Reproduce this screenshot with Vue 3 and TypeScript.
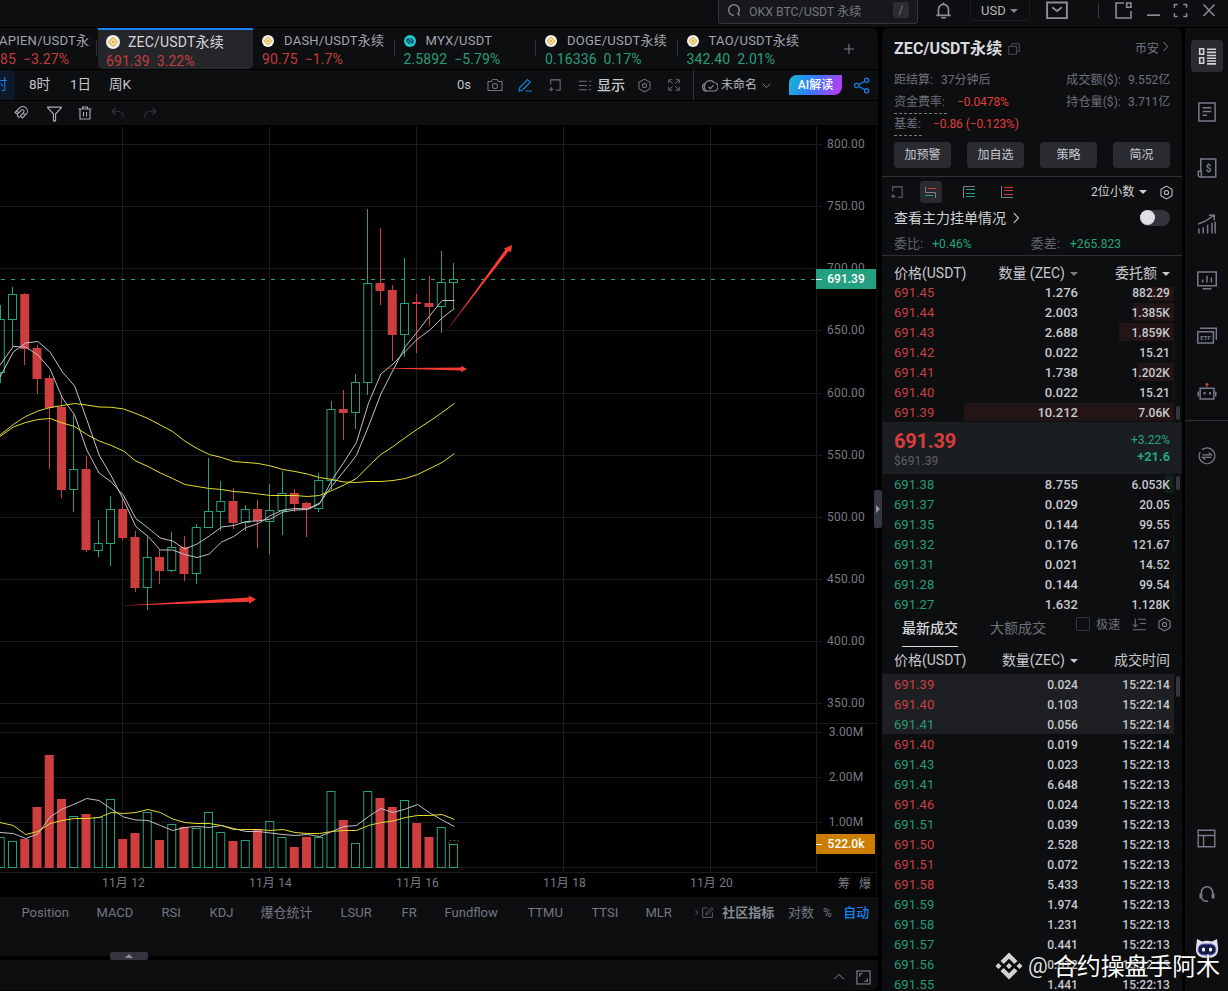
<script setup lang="ts">
import { defineComponent, h } from 'vue'

const glyphs: Record<string, string> = {
  search: 'M7.5 13.2a5.7 5.7 0 1 1 4-1.7l2 1.9',
  bell: 'M1.2 12.5h13.6M3.3 12V7a4.7 4.7 0 0 1 9.4 0v5M8 2.3V.5M5.8 14.8h4.4',
  mail: 'M.8 2.5h14.4v11.4H.8zM4.5 6 8 8.8 11.5 6',
  panel: 'M8.5 1H1v14h14V8.5M11 1h4v4h-4zM1 15h14',
  minus: 'M1 13h14',
  full: 'M1.5 5V1.5H5M11 1.5h3.5V5M14.5 11v3.5H11M5 14.5H1.5V11',
  close: 'M2.5 2.5 13.5 14M13.5 2.5 2.5 14',
  copy: 'M2 5h9v9H2zM5.500 5V2H14v9h-3',
  right: 'M5.500 2.500 10.800 8 5.500 13.500',
  down: 'M3 5.500 8 10.500 13 5.500',
  up: 'M2.500 10.500 8 5 13.500 10.500',
  plus: 'M8 3v10M3 8h10',
  magnet: 'M2 7.500 6.500 3a4.500 4.500 0 0 1 6.600 6.200L9.500 13 7.300 11l3.600-3.800A1.700 1.700 0 0 0 8.500 5L4.300 9.300zM3.500 6 6 8M12.200 10.200 9.800 8M4.500 9.800a2.500 2.500 0 0 0 2.300 2.600',
  funnel: 'M1 2h14M1.500 2.500 7 8.500V15h2V8.500l5.500-6',
  trash: 'M1.500 4h13M5.500 4V2h5v2M3 4v10h10V4M6.500 7v4.500M9.500 7v4.500',
  undo: 'M5.500 3 2 6.200 5.500 9.500M2.500 6.200h5c4 0 6 2 6 6',
  redo: 'M10.500 3 14 6.200 10.500 9.500M13.500 6.200h-5c-4 0-6 2-6 6',
  camera: 'M1 4.500h3.500L6 2.500h4l1.500 2H15v9H1zM8 11.500a2.500 2.500 0 1 0 0-5 2.500 2.500 0 0 0 0 5',
  pencil: 'M2 14l.7-3.500L10.500 2.500l2.700 2.700L5.500 13zM8.500 14H15',
  addpane: 'M4 7V2h10v11H9.500M4.500 9.500v5M2 12h5',
  list: 'M1 3.500h8.500M1 8h8.500M1 12.500h8.500M12 3.500h2M12 8h2M12 12.500h2',
  hex: 'M8 1.200 13.900 4.600v6.800L8 14.800 2.100 11.400V4.600zM8 10.200a2.200 2.200 0 1 0 0-4.400 2.200 2.200 0 0 0 0 4.400',
  expand: 'M2 6V2h4M10 2h4v4M14 10v4h-4M6 14H2v-4M2.500 2.500 6.500 6.500M13.500 2.500 9.500 6.500M13.500 13.500 9.500 9.500M2.500 13.500 6.500 9.500',
  cloud: 'M5.500 13.200A3.700 3.700 0 0 1 4 6a5 5 0 0 1 8.300-.8 4 4 0 0 1-.6 8H5.500a4 4 0 0 1-1.200-6.500M7 9.200l1.800 1.800L12 7.500',
  share: 'M5.300 7.300 11 3.900M5.300 8.700 11 12.100M3.500 10.100a2.100 2.100 0 1 0 0-4.200 2.100 2.100 0 0 0 0 4.200M12.800 5a2 2 0 1 0 0-4 2 2 0 0 0 0 4M12.800 15a2 2 0 1 0 0-4 2 2 0 0 0 0 4',
  sort: 'M3.500 1.500v9M1 8l2.500 2.500L6 8M6.500 2.500H15M8.500 7H15M1 13.500h14',
  edit: 'M8 2.500H2v11.500h12V8M6 10.500l.5-2.200L13 2l1.500 1.500L8.300 10z',
  frame: 'M1 1h14v14H1zM4 7V4h3M12 9v3H9',
  board: 'M1.500 1.500h3.500v5H1.500zM1.500 9.500h3.500v5H1.500zM8 2H16M8 4.800H16M8 7.500H16M8 10H16M8 12.500H16M8 15H16',
  doc: 'M1.500 .8h13v14.400h-13zM4.500 4.500h7M4.500 7.500h7M4.500 10.500H8',
  bill: 'M3 10.500V.8h12v14.400H2.500A1.700 1.700 0 0 1 1 13.500v-3h2.500V15',
  growth: 'M1.500 11.500v4M5 10.500v5M8.500 8.500v7M12 7v8.500M14.500 6v9.500M1 8l6-2.500L13.500 1M9.500 1h4.300v4',
  screen: 'M.6 1.500h14.800v11H.6zM4.500 15h7M4.500 7.500V10M8 4.500V10M11.500 6V10',
  etf: 'M.6 4.500h12.500v9H.6zM2.500 1.800h13V11',
  robot: 'M2.500 5h11v8.500h-11zM1 7.500v4M15 7.500v4',
  swap: 'M3.500 2.500A7 7 0 1 1 1 8c0-1.500.4-2.500 1-3.500M4 7h8L9.500 4.800M12 9.200H4l2.500 2.200',
  layout: 'M1 1h14v14H1zM1 5.500h14M5.500 5.500V15',
  headset: 'M3 9V6.500a5 5 0 0 1 10 0V9M2 7.500v4.500M3.200 7.500v4.500M12.800 7.500v4.500M14 7.500v4.500M3.500 12c.8 1.800 2 2.500 4.500 2.500h1',
}

const Icon = defineComponent({
  props: { name: { type: String, required: true }, size: { type: Number, default: 16 }, weight: { type: Number, default: 1.1 } },
  setup(props) {
    return () =>
      h('svg', { width: props.size, height: props.size, viewBox: '0 0 16 16', fill: 'none', stroke: 'currentColor', 'stroke-width': props.weight }, [
        h('path', { d: glyphs[props.name] }),
      ])
  },
})

interface Tab { name: string; price: string; change: string; tone: string; coin: string }
const tabs: Tab[] = [
  { name: 'APIEN/USDT永续', price: '85', change: '-3.27%', tone: 'red', coin: '' },
  { name: 'ZEC/USDT永续', price: '691.39', change: '3.22%', tone: 'red active', coin: 'bn' },
  { name: 'DASH/USDT永续', price: '90.75', change: '-1.7%', tone: 'red', coin: 'bn' },
  { name: 'MYX/USDT', price: '2.5892', change: '-5.79%', tone: 'green', coin: 'myx' },
  { name: 'DOGE/USDT永续', price: '0.16336', change: '0.17%', tone: 'green', coin: 'bn' },
  { name: 'TAO/USDT永续', price: '342.40', change: '2.01%', tone: 'green', coin: 'bn' },
]

// [rising, wick top, body top, body bottom, wick bottom, volume top]
const candles: number[][] = [
  [1, 305, 319, 373, 383, 837], [1, 287, 294, 320, 347, 841], [0, 293, 294, 349, 365, 839], [0, 345, 348, 379, 394, 807],
  [0, 375, 378, 408, 469, 755], [0, 396, 407, 490, 498, 799], [1, 415, 469, 490, 512, 816], [0, 456, 469, 550, 552, 814],
  [1, 520, 543, 551, 557, 817], [1, 496, 509, 544, 566, 799], [0, 499, 509, 538, 540, 839], [0, 531, 537, 588, 592, 833],
  [1, 537, 557, 588, 610, 812], [0, 550, 557, 571, 584, 840], [1, 532, 547, 571, 572, 824], [0, 536, 547, 574, 581, 827],
  [1, 524, 527, 574, 584, 828], [1, 458, 511, 528, 528, 812], [1, 481, 501, 512, 531, 832], [0, 488, 501, 523, 529, 841],
  [1, 505, 509, 523, 531, 840], [0, 500, 509, 521, 548, 829], [1, 484, 510, 522, 554, 821], [1, 471, 493, 511, 535, 837],
  [0, 489, 493, 504, 512, 847], [0, 502, 503, 509, 537, 837], [1, 473, 480, 509, 512, 837], [1, 401, 409, 481, 490, 791],
  [0, 390, 409, 413, 440, 820], [1, 374, 382, 413, 429, 843], [1, 209, 283, 383, 395, 791], [0, 228, 283, 291, 305, 798],
  [0, 285, 290, 335, 361, 807], [1, 258, 303, 335, 357, 800], [0, 294, 302, 304, 353, 823], [0, 276, 303, 307, 326, 837],
  [1, 251, 282, 307, 333, 827], [1, 263, 279, 283, 309, 844],
]
const bars = candles.map(([up, wt, t, b, wb, v], i) => ({
  up: up === 1, wt, t, b, wb, v,
  x: 122.75 + (i - 10) * 12.25,
  w: Math.floor(122.8 + (i - 10) * 12.25) + 0.5,
}))

const series: { tone: string; ys: number[] }[] = [
  { tone: 'pale', ys: [377, 352, 343, 341.5, 352, 372, 386, 419.5, 455, 476, 500, 526.5, 536.5, 550, 550, 554.5, 557.5, 554, 542, 536.5, 527.5, 523.5, 515.5, 510, 508.5, 509, 503, 486, 471, 455.5, 426, 394, 370, 346.5, 331.5, 315.5, 300.5, 300.5] },
  { tone: 'pale', ys: [365, 346.5, 347, 355, 369, 398, 415, 450, 473, 482, 495.5, 518.5, 528, 538, 541, 549, 544, 536, 527, 525.5, 521.5, 521, 519, 512, 510, 509.5, 504, 480, 462, 442.5, 403, 374, 364, 351, 339, 330, 318, 308.5] },
  { tone: 'gold', ys: [435, 424.5, 416.5, 411, 407.5, 405.5, 403.5, 405, 407, 407.3, 409, 413.5, 418.5, 425, 431.5, 441, 448.5, 454.5, 457.5, 461.5, 462.5, 463.5, 466, 469.5, 471.5, 474, 477.5, 479.5, 482, 482.5, 481.5, 481.5, 480.5, 478.5, 474.5, 468.5, 462.5, 453.5] },
  { tone: 'gold', ys: [436.5, 427, 422.5, 419.5, 418.5, 423, 426.5, 434.5, 441, 445.5, 451, 461, 466.5, 473, 478.5, 484.5, 486.5, 488.5, 489.5, 491.5, 492.5, 494, 495.5, 495.5, 495.5, 496.5, 495.5, 490.5, 485, 478.5, 466, 454.5, 446.5, 437.5, 429, 421, 412.5, 403.5] },
  { tone: 'pale', ys: [832.5, 833.5, 838.5, 834, 817, 809, 804, 798.5, 800.5, 809, 817, 820, 820.5, 825.5, 830.5, 827.5, 826.5, 827.5, 825.5, 828.5, 831.5, 831.5, 833, 834.5, 835.5, 834.5, 836.5, 831.5, 826.5, 825.5, 816.5, 808.5, 812.5, 809, 804.5, 813, 820, 826.5] },
  { tone: 'gold', ys: [822.5, 825.5, 834.5, 831.5, 823.5, 820.5, 818.5, 818.5, 817.5, 812.5, 813.5, 812.5, 809.5, 812.5, 819, 822.5, 823.5, 823.5, 825.5, 829.5, 829.5, 829.5, 830.5, 829.5, 832.5, 833.5, 833.5, 831.5, 830.5, 830.5, 825.5, 822.5, 821, 817.5, 815.5, 815.5, 814.5, 819.5] },
]
const trace = (ys: number[]): string => ys.map((y, i) => `${i === 0 ? 0 : (i * 12.25 + 1.1).toFixed(1)},${y}`).join(' ')

const priceTicks: [string, number][] = [['800.00', 144.5], ['750.00', 206.5], ['700.00', 268.5], ['650.00', 330.5], ['600.00', 393.5], ['550.00', 455.5], ['500.00', 517.5], ['450.00', 579.5], ['400.00', 641.5], ['350.00', 703.5], ['3.00M', 732.5], ['2.00M', 777.5], ['1.00M', 822.5]]
const dayTicks: [string, number][] = [['11月 12', 122.5], ['11月 14', 269.5], ['11月 16', 416.5], ['11月 18', 563.5], ['11月 20', 710.5]]

const indicators: [string, number][] = [['Position', 75], ['MACD', 65], ['RSI', 48], ['KDJ', 51], ['爆仓统计', 80], ['LSUR', 61], ['FR', 43], ['Fundflow', 83], ['TTMU', 64], ['TTSI', 54], ['MLR', 49]]

// [price, quantity, amount, depth bar width]
type Level = [string, string, string, number]
const asks: Level[] = [
  ['691.45', '1.276', '882.29', 26], ['691.44', '2.003', '1.385K', 41], ['691.43', '2.688', '1.859K', 55],
  ['691.42', '0.022', '15.21', 1], ['691.41', '1.738', '1.202K', 36], ['691.40', '0.022', '15.21', 1], ['691.39', '10.212', '7.06K', 210],
]
const bids: Level[] = [
  ['691.38', '8.755', '6.053K', 9], ['691.37', '0.029', '20.05', 0], ['691.35', '0.144', '99.55', 1], ['691.32', '0.176', '121.67', 1],
  ['691.31', '0.021', '14.52', 0], ['691.28', '0.144', '99.54', 1], ['691.27', '1.632', '1.128K', 1],
]
const trades: [string, string, string, string][] = [
  ['691.39', '0.024', '15:22:14', 'sell hot'], ['691.40', '0.103', '15:22:14', 'sell hot'], ['691.41', '0.056', '15:22:14', 'buy hot'],
  ['691.40', '0.019', '15:22:14', 'sell'], ['691.43', '0.023', '15:22:13', 'buy'], ['691.41', '6.648', '15:22:13', 'buy'],
  ['691.46', '0.024', '15:22:13', 'sell'], ['691.51', '0.039', '15:22:13', 'buy'], ['691.50', '2.528', '15:22:13', 'sell'],
  ['691.51', '0.072', '15:22:13', 'sell'], ['691.58', '5.433', '15:22:13', 'sell'], ['691.59', '1.974', '15:22:13', 'buy'],
  ['691.58', '1.231', '15:22:13', 'buy'], ['691.57', '0.441', '15:22:13', 'buy'], ['691.56', '0.012', '15:22:13', 'buy'],
  ['691.55', '1.441', '15:22:13', 'buy'],
]
const railTop = ['board', 'doc', 'bill', 'growth', 'screen', 'etf', 'robot']
</script>

<template>
  <div class="app">
    <header class="topbar">
      <div class="search"><Icon name="search" :size="15" :weight="1.5" /><span>OKX BTC/USDT 永续</span><kbd>/</kbd></div>
      <Icon class="t-bell" name="bell" :size="17" :weight="1.6" />
      <div class="currency">USD<i class="caret"></i></div>
      <Icon class="t-mail" name="mail" :size="22" :weight="1.4" />
      <i class="t-sep"></i>
      <Icon class="t-panel" name="panel" :size="17" :weight="1.5" />
      <Icon class="t-min" name="minus" :size="15" :weight="1.8" />
      <Icon class="t-full" name="full" :size="15" :weight="1.6" />
      <Icon class="t-close" name="close" :size="16" :weight="1.5" />
    </header>

    <main class="body">
      <section class="left">
        <nav class="tabs">
          <div v-for="t in tabs" :key="t.name" class="tab" :class="t.tone">
            <div class="tab-name">
              <svg v-if="t.coin === 'bn'" class="coin" viewBox="0 0 14 14">
                <circle cx="7" cy="7" r="7" fill="#f2f2f2" />
                <path d="M7 2.700 11.300 7 7 11.300 2.700 7z" fill="none" stroke="#e9b84a" stroke-width="1.500" />
                <path d="M7 5.200 8.800 7 7 8.800 5.200 7z" fill="#e9a820" />
              </svg>
              <svg v-else-if="t.coin === 'myx'" class="coin" viewBox="0 0 14 14">
                <circle cx="7" cy="7" r="7" fill="#1cc8d2" />
                <path d="M6 4 3.500 5.500v2L6 9M8 5l2.500 1.500v2L8 10M5 5l4 4M5.500 8.500v2M8.500 3.500v2" fill="none" stroke="#123f49" stroke-width="1.500" />
              </svg>
              <span>{{ t.name }}</span>
            </div>
            <div class="tab-price"><span>{{ t.price }}</span><span>{{ t.change.replace('-', '−') }}</span></div>
          </div>
          <button class="add-tab"><Icon name="plus" /></button>
        </nav>

        <div class="toolbar">
          <span class="period on">时</span><span class="period p2">8时</span><span class="period p3">1日</span><span class="period p4">周K</span>
          <div class="tools">
            <span class="delay">0s</span>
            <Icon name="camera" /><Icon class="blue" name="pencil" /><Icon name="addpane" :size="15" /><Icon class="t-list" name="list" :size="15" />
            <b>显示</b>
            <Icon class="t-hex" name="hex" :size="15" /><Icon class="t-exp" name="expand" :size="14" />
          </div>
          <div class="layout-name"><Icon name="cloud" :size="17" /><span>未命名</span><Icon name="down" :size="13" /></div>
          <div class="ai">AI解读</div>
          <Icon class="blue" name="share" :size="17" />
        </div>

        <div class="drawbar">
          <Icon name="magnet" /><Icon name="funnel" :size="17" /><Icon name="trash" /><Icon class="faint" name="undo" /><Icon class="faint" name="redo" />
        </div>

        <svg class="chart" viewBox="0 126 877 769" width="877" height="769">
          <g class="grid">
            <path v-for="[l, y] in priceTicks" :key="l" :d="`M0 ${y}H822`" />
            <path v-for="[l, x] in dayTicks" :key="l" :d="`M${x} 126V873`" />
            <path d="M816.5 126V873M0 723.5H876M0 872.5H876M0 867.500H816" />
          </g>
          <path class="last-line" d="M1 279.5H816" />
          <g v-for="b in bars" :key="b.x">
            <template v-if="b.up">
              <path class="up" :d="`M${b.w} ${b.wt}V${b.t}M${b.w} ${b.b}V${b.wb}`" />
              <rect class="up" :x="b.x - 4" :y="b.t + 0.5" width="8" :height="b.b - b.t - 1" />
              <rect class="up" :x="b.x - 4" :y="b.v + 0.5" width="8" :height="867 - b.v" />
            </template>
            <template v-else>
              <path class="down" :d="`M${b.w} ${b.wt}V${b.wb}`" />
              <rect class="down-fill" :x="b.x - 4.5" :y="b.t" width="9" :height="b.b - b.t" />
              <rect class="down-fill" :x="b.x - 4.5" :y="b.v" width="9" :height="868 - b.v" />
            </template>
          </g>
          <path d="M449 844V840.500H458V844" fill="none" stroke="#555" stroke-dasharray="2 2" />
          <polyline v-for="(s, i) in series" :key="i" :class="s.tone" :points="trace(s.ys)" />
          <g class="arrow">
            <path d="M121 605.700 249 597.400 248.500 595.600 256 599.200 249 603.700V601.800z" />
            <path d="M378 368.300 461 367.500 461.500 366 467 369 461.500 372 461 370.500z" />
            <path d="M446 331.500 505.300 249.700 504 248.500 512 245 511 252.300 508.700 251z" />
          </g>
          <g class="axis">
            <text v-for="[l, y] in priceTicks" :key="l" x="846" :y="y + 3.2" text-anchor="middle">{{ l }}</text>
            <text v-for="[l, x] in dayTicks" :key="l" :x="x + 1" y="887" text-anchor="middle">{{ l }}</text>
            <text x="838" y="888">筹</text><text x="859" y="888">爆</text>
          </g>
          <rect x="816" y="269" width="60" height="20" fill="#24a080" />
          <rect x="816" y="834" width="59" height="20" fill="#cc7e00" />
          <path d="M816 279.500h6M816 844.500h6" stroke="#fff" />
          <text class="flag" x="846" y="283" text-anchor="middle">691.39</text>
          <text class="flag" x="846" y="848" text-anchor="middle">522.0k</text>
          <path d="M876.500 126V895" stroke="#101113" />
        </svg>

        <div class="indicators">
          <span v-for="[n, w] in indicators" :key="n" :style="{ width: w + 'px' }">{{ n }}</span>
          <i class="more">›</i><Icon name="edit" :size="13" /><b>社区指标</b><em>对数</em><em class="pct">%</em><em class="auto">自动</em>
          <div class="handle"><i></i></div>
        </div>
        <footer class="bottom"><Icon name="up" :size="14" /><Icon name="frame" :size="15" /></footer>
        <div class="side-handle"><i></i></div>
      </section>

      <aside class="book">
        <div class="info">
          <div class="title"><h1>ZEC/USDT永续</h1><Icon name="copy" :size="14" /><span class="ex">币安</span><Icon class="ex-arrow" name="right" :size="13" /></div>
          <div class="line"><span>距结算:</span><span class="v1 wait">37分钟后</span><span class="r">成交额($):</span><span class="v2">9.552亿</span></div>
          <div class="line"><span class="dash d1">资金费率:</span><span class="v1 neg">−0.0478%</span><span class="r">持仓量($):</span><span class="v2">3.711亿</span></div>
          <div class="line"><span class="dash d2">基差:</span><span class="v1 neg">−0.86 (−0.123%)</span></div>
          <div class="actions"><button>加预警</button><button>加自选</button><button>策略</button><button>简况</button></div>
        </div>

        <div class="depth-head">
          <div class="modes">
            <Icon class="m0" name="addpane" :size="15" />
            <span class="mode on"><svg width="14" height="14" fill="none"><path d="M1.500 2V7.500H11.500V13" stroke="#7d808c" /><path d="M4 3.500h8" stroke="#d33b3b" /><path d="M1 10.500h8" stroke="#24a080" /></svg></span>
            <span class="mode"><svg width="14" height="14" fill="none"><path d="M13 1.500H1.500V13" stroke="#7d808c" /><path d="M4 4.500h9M4 8.500h9M4 11.500h9" stroke="#24a080" /></svg></span>
            <span class="mode"><svg width="14" height="14" fill="none"><path d="M1.500 1v11.500H13" stroke="#7d808c" /><path d="M4 2.500h9M4 5.500h9M4 9.500h9" stroke="#d33b3b" /></svg></span>
            <span class="decimals">2位小数<i class="caret"></i></span>
            <Icon class="m-hex" name="hex" :size="15" />
          </div>
          <div class="main-orders">查看主力挂单情况<Icon name="right" :size="14" :weight="1.300" /><i class="switch"></i></div>
          <div class="ratio"><span>委比:</span><em>+0.46%</em><span class="r2">委差:</span><em class="e2">+265.823</em></div>
        </div>

        <div class="cols head"><span>价格(USDT)</span><span>数量 (ZEC)<i class="caret dim"></i></span><span>委托额<i class="caret"></i></span></div>
        <div class="levels asks">
          <div v-for="a in asks" :key="a[0]" class="cols row"><i class="bar" :style="{ width: a[3] + 'px' }"></i><span class="price neg">{{ a[0] }}</span><span>{{ a[1] }}</span><span class="small">{{ a[2] }}</span></div>
          <i class="thumb"></i>
        </div>
        <div class="last">
          <div><strong>691.39</strong><small>$691.39</small></div>
          <div class="delta"><span>+3.22%</span><b>+21.6</b></div>
        </div>
        <div class="levels bids">
          <div v-for="b in bids" :key="b[0]" class="cols row"><i class="bar" :style="{ width: b[3] + 'px' }"></i><span class="price pos">{{ b[0] }}</span><span>{{ b[1] }}</span><span class="small">{{ b[2] }}</span></div>
          <i class="thumb"></i>
        </div>
        <div class="trade-tabs"><b>最新成交</b><span>大额成交</span><i class="check"></i><small>极速</small><Icon class="s1" name="sort" :size="15" /><Icon class="s2" name="hex" :size="15" /></div>
        <div class="cols head h2"><span>价格(USDT)</span><span>数量(ZEC)<i class="caret"></i></span><span>成交时间</span></div>
        <div class="trades">
          <div v-for="(t, i) in trades" :key="i" class="cols row" :class="t[3]"><span class="price">{{ t[0] }}</span><span class="small">{{ t[1] }}</span><span class="small">{{ t[2] }}</span></div>
          <i class="thumb"></i>
        </div>
      </aside>

      <aside class="rail">
        <div v-for="n in railTop" :key="n" class="rail-item" :class="{ on: n === 'board' }">
          <span class="rail-box"><Icon :name="n" :size="n === 'board' ? 18 : 20" :weight="n === 'board' ? 1.400 : 1.200" />
            <svg v-if="n === 'bill'" class="over" width="20" height="20"><text x="11.500" y="14" text-anchor="middle">$</text></svg>
            <svg v-else-if="n === 'etf'" class="over" width="20" height="20"><text class="tiny" x="8.600" y="13.800" text-anchor="middle">ETF</text></svg>
            <svg v-else-if="n === 'robot'" class="over" width="20" height="20"><circle cx="10" cy="2.500" r="1.500" fill="#d4452f" /><path d="M10 3v3" stroke="#a33" /><rect x="6.500" y="10" width="2" height="2.500" /><rect x="12" y="10" width="2" height="2.500" /></svg>
          </span>
        </div>
        <hr />
        <div class="rail-item"><Icon name="swap" :size="18" /></div>
        <div class="grow"></div>
        <div class="rail-item"><Icon name="layout" :size="19" :weight="1.200" /></div>
        <div class="rail-item"><Icon name="headset" :size="18" :weight="1.400" /></div>
        <div class="rail-item">
          <svg width="24" height="24" viewBox="0 0 24 24"><path d="M1 10 2 1 7 3.500Q12 2 17 3.500L22 1 23 10Q24 20 12 20 0 20 1 10z" fill="#e4e2ea" /><rect x="3" y="6" width="18" height="11" rx="5.500" fill="#141c46" stroke="#7965d8" /><rect x="7" y="9.500" width="3" height="4" rx="1.500" fill="#fff" /><rect x="14" y="9.500" width="3" height="4" rx="1.500" fill="#fff" /></svg>
        </div>
      </aside>
    </main>

    <div class="watermark">
      <svg width="28" height="28" viewBox="0 0 28 28" fill="#d2d2cd"><path d="M14 .5 22.500 9 19.300 12 14 6.800 8.700 12 5.500 9zM14 27.500 5.500 19 8.700 16 14 21.200 19.300 16 22.500 19zM14 11 17 14 14 17 11 14zM3.500 11 6.500 14 3.500 17 .5 14zM24.500 11 27.500 14 24.500 17 21.500 14z" /></svg>
      <span class="at">@</span><span>合约操盘手阿木</span>
    </div>
  </div>
</template>

<style>
html, body { margin: 0; background: #000; overflow: hidden; }
</style>

<style scoped>
* { box-sizing: border-box; }
svg { display: block; flex: none; }
i, em { font-style: normal; }
.app { position: relative; width: 1228px; height: 991px; overflow: hidden; background: #000; color: #d4d5d9; font: 13px/20px Roboto, "Noto Sans CJK SC", sans-serif; display: flex; flex-direction: column; white-space: nowrap; }
button { border: 0; padding: 0; font: inherit; color: inherit; background: none; }
.caret { display: inline-block; border: 4px solid transparent; border-top: 4px solid currentColor; border-bottom: 0; margin-left: 5px; vertical-align: 2px; }
.topbar { height: 27px; flex: none; background: #0d0e10; display: flex; align-items: flex-start; padding-left: 718px; color: #8b8e99; }
.search { width: 200px; height: 24px; background: #17181c; border: 1px solid #34353c; border-top: 0; border-radius: 0 0 4px 4px; display: flex; align-items: center; padding: 0 8px; color: #74777f; }
.search svg { color: #85878f; margin: -3px 0 0 0; }
.search span { margin-left: 7px; font-size: 12.300px; }
.search kbd { margin-left: auto; margin-top: -4px; width: 16px; height: 16px; background: #2c2d33; border-radius: 2px; font: 12px/16px Roboto; text-align: center; }
.t-bell { margin: 2px 0 0 17px; }
.currency { width: 60px; height: 21px; margin-left: 18px; border: 1px solid #1b1c20; border-top: 0; border-radius: 0 0 4px 4px; padding: 1px 0 0 10px; color: #b4b6bd; }
.currency .caret { color: #85878f; margin-left: 4px; }
.t-mail { margin: -1px 0 0 16px; }
.t-sep { width: 1px; height: 15px; background: #3a3b40; margin: 3px 0 0 30px; }
.t-panel { margin: 2px 0 0 16px; }
.t-min { margin: 3px 0 0 14px; }
.t-full { margin: 3px 0 0 12px; }
.t-close { margin: 2px 0 0 13px; }
.body { flex: 1; display: flex; margin-top: 1px; min-height: 0; }
.left { position: relative; width: 878px; display: flex; flex-direction: column; flex: none; }
.tabs { height: 41px; background: #0d0e10; display: flex; border-radius: 0 8px 0 0; }
.tab { position: relative; width: 141.500px; padding: 4px 0 0 9px; color: #a2a4ae; flex: none; }
.tab::after { content: ""; position: absolute; right: 0; top: 12px; width: 1px; height: 16px; background: #303138; }
.tab:nth-child(6)::after, .tab:nth-child(2)::after { display: none; }
.tab:first-child { width: 98px; padding-left: 0; }
.tab:first-child::after { right: 1px; }
.tab:first-child .tab-name { width: 90px; overflow: hidden; }
.tab:first-child .tab-name span { margin-left: -1px; }
.tab.active { width: 155px; background: #25262a; border-top: 2px solid #1785f5; border-radius: 0 0 5px 5px; padding: 2px 0 0 8px; }
.tab-name { display: flex; align-items: center; height: 18px; letter-spacing: .25px; }
.coin { width: 12px; height: 12px; margin-right: 10px; }
.active .coin { width: 14px; height: 14px; margin-right: 8px; }
.active .tab-name { font-size: 14px; color: #d4d5da; height: 20px; letter-spacing: .2px; }
.tab-price { display: flex; gap: 7px; font-size: 14px; line-height: 19px; letter-spacing: .1px; }
.active .tab-price { line-height: 18px; }
.red .tab-price { color: #c53c3c; }
.green .tab-price { color: #269e78; }
.add-tab { margin-left: 22px; width: 20px; height: 41px; color: #7b7e88; }
.toolbar { height: 30px; margin-top: 1px; background: #0d0e10; display: flex; align-items: center; color: #7b7e88; }
.period { font-size: 13.500px; color: #c6c7cc; height: 30px; line-height: 29px; flex: none; }
.on.period { width: 15px; background: #0b1929; color: #197fe2; text-indent: -6px; border-radius: 0 4px 4px 0; overflow: hidden; }
.p2 { margin-left: 14px; width: 41px; } .p3 { width: 39px; } .p4 { width: 348px; }
.tools { display: flex; align-items: center; height: 30px; width: 237px; flex: none; border-right: 1px solid #35363b; color: #70727b; }
.tools svg { margin-left: 14px; }
.delay { color: #bfc0c5; font-size: 13px; width: 16px; }
.tools .t-list { margin-left: 16px; }
.tools b { font-size: 14px; font-weight: 500; color: #c9cacf; margin-left: 4px; width: 28px; }
.tools .t-hex { margin-left: 12px; } .tools .t-exp { margin-left: 15px; }
.blue { color: #1683ee; }
.layout-name { display: flex; align-items: center; margin-left: 7px; width: 81px; flex: none; font-size: 12px; color: #b9bac0; gap: 3px; }
.layout-name svg { color: #858791; }
.ai { width: 53px; height: 20px; flex: none; border-radius: 8px 0 8px 0; background: linear-gradient(110deg, #16b9cf, #3479ff 45%, #c735ef); color: #fff; font: 500 12px/20px Roboto, "Noto Sans CJK SC", sans-serif; text-align: center; margin: 0 11px 0 7px; }
.drawbar { height: 24px; margin-top: 1px; background: #0d0e10; display: flex; align-items: center; padding-left: 13px; gap: 17px; color: #a8abb5; margin-bottom: 1px; }
.drawbar svg:nth-child(3) { margin-left: -3px; }
.drawbar svg:nth-child(5) { margin-left: -1px; }
.faint { color: #33353a; }
.grid path { stroke: #1a1b1e; fill: none; }
.last-line { stroke: #2b9f7b; stroke-dasharray: 4 6; }
.up { fill: none; stroke: #26a17d; }
.down { stroke: #cf3e3e; }
.down-fill { fill: #cf3e3e; }
.pale { fill: none; stroke: #bfc0c7; stroke-width: 1; }
.gold { fill: none; stroke: #e3dc31; stroke-width: 1; }
.arrow path { fill: #fb3a34; }
.axis text { fill: #777a83; font-size: 12px; letter-spacing: .15px; }
.flag { fill: #fff; font-size: 12px; font-weight: 500; }
.indicators { position: relative; height: 59px; margin-top: 2px; background: #0d0e10; display: flex; padding: 6px 0 0 21.500px; color: #737682; }
.indicators span { flex: none; }
.indicators svg { margin: 3px 8px 0 2px; color: #62656e; }
.more { width: 5px; color: #555; line-height: 18px; }
.indicators b { font-weight: 700; width: 68px; color: #858893; }
.indicators em { width: 36px; } .indicators .pct { width: 21px; font-size: 12px; } .indicators .auto { color: #1683ee; font-weight: 500; }
.handle { position: absolute; left: 110px; bottom: -4px; width: 38px; height: 8px; background: #34353e; border-radius: 2px; }
.handle i { display: block; width: 0; margin: 2px auto 0; border: 4px solid transparent; border-top: 0; border-bottom-color: #8a8d99; }
.bottom { height: 30px; margin-top: 4px; background: #0d0e10; border-radius: 0 0 6px 0; display: flex; justify-content: flex-end; align-items: center; padding: 4px 7.500px 0 0; gap: 10px; color: #8a8c97; }
.side-handle { position: absolute; left: 874px; top: 462px; width: 8px; height: 38px; background: #34353e; border-radius: 2px; z-index: 2; }
.side-handle i { position: absolute; left: 2px; top: 15px; border: 4px solid transparent; border-right: 0; border-left-color: #9294a2; }
.book { width: 300px; margin-left: 4px; background: #0d0e10; border-radius: 8px 8px 0 0; display: flex; flex-direction: column; flex: none; overflow: hidden; }
.info { height: 149px; flex: none; border-bottom: 1px solid #2e2f34; padding: 9px 12px 0; }
.title { display: flex; align-items: center; height: 23px; margin-bottom: 10px; color: #4d4f56; }
.title h1 { font-size: 16px; line-height: 23px; font-weight: 700; margin: 0; color: #d9dadd; width: 113px; letter-spacing: .1px; }
.ex { color: #747782; margin-left: auto; font-size: 12px; }
.title .ex-arrow { color: #8a8c96; margin: -4px -2px 0 0; }
.line { display: flex; height: 22px; line-height: 20px; font-size: 12px; color: #6d707b; }
.v1 { margin-left: 9px; letter-spacing: -.1px; }
.wait { margin-left: 8px; letter-spacing: 0; }
.line .neg { color: #e03e3c; }
.dash { height: 22px; background: linear-gradient(90deg, #777 65%, transparent 0) 0 21px / 5px 1px repeat-x; }
.d1 { width: 54px; } .d2 { width: 30px; }
.r { margin-left: auto; }
.v2 { margin-left: 7px; width: 42px; text-align: right; }
.r { letter-spacing: .1px; }
.actions { display: flex; justify-content: space-between; margin-top: 6px; }
.actions button { width: 57px; height: 26px; line-height: 27px; background: #2a2b31; border-radius: 4px; font-size: 12px; color: #c8c9ce; }
.depth-head { height: 79px; flex: none; border-bottom: 1px solid #2e2f34; }
.modes { display: flex; align-items: center; height: 30px; padding-left: 7px; }
.m0 { color: #676973; margin-right: 16px; }
.mode { width: 22px; height: 22px; border-radius: 3px; margin-right: 16px; display: grid; place-items: center; }
.mode.on { background: #2a2b31; }
.decimals { margin-left: 57px; font-size: 12.200px; color: #cfd0d4; width: 68px; }
.m-hex { color: #bfc1c9; }
.main-orders { display: flex; align-items: center; height: 22px; padding-left: 12px; font-size: 14px; color: #d0d1d5; }
.main-orders svg { margin-left: 3px; }
.switch { margin-left: auto; margin-right: 12px; width: 30px; height: 16px; border-radius: 8px; background: #33343b; }
.switch::before { content: ""; display: block; width: 15px; height: 15px; border-radius: 50%; background: #dfe1e4; }
.ratio { display: flex; padding: 5px 12px 0; font-size: 12.500px; color: #60636c; }
.ratio span { font-size: 13px; } 
.ratio em { color: #25a37d; margin-left: 9px; font-size: 12px; letter-spacing: .1px; }
.ratio .r2 { margin-left: 59px; } .ratio .e2 { margin-left: 10px; }
.cols { display: grid; grid-template-columns: 76px 108px 92px; padding-left: 12px; position: relative; }
.cols span { text-align: right; position: relative; }
.cols span:first-child { text-align: left; }
.head { height: 31px; flex: none; font-size: 14px; line-height: 35px; color: #c7c8cc; }
.caret.dim { color: #777; }
.levels { position: relative; overflow: hidden; flex: none; }
.asks { height: 135px; }
.asks .row:first-of-type { margin-top: -4px; }
.bids { height: 141px; padding-top: 1px; }
.row { height: 20px; line-height: 20px; font-weight: 500; font-size: 13px; color: #c8c9ce; }
.row .price { text-align: left; font-weight: 400; letter-spacing: .05px; }
.row .small { font-size: 12px; letter-spacing: .05px; }
.neg, .sell .price { color: #c94040; }
.pos, .buy .price { color: #259b76; }
.bar { position: absolute; right: 8px; top: 0; height: 18px; background: #231415; }
.bids .bar { background: #0f211c; }
.thumb { position: absolute; right: 2px; width: 4px; border-radius: 2px; background: #34353d; }
.asks .thumb { bottom: 2px; height: 14px; } .bids .thumb { top: 2px; height: 14px; }
.last { height: 52px; flex: none; background: #1b1e21; padding: 6px 12px 0; display: flex; justify-content: space-between; }
.last strong { display: block; font-size: 20px; line-height: 26px; color: #d93c3b; letter-spacing: -.2px; }
.last small { display: block; font-size: 12px; line-height: 15px; color: #5d6067; letter-spacing: .1px; }
.delta { text-align: right; color: #25a37d; font-size: 12px; padding-top: 4px; line-height: 17px; }
.delta b { display: block; font-size: 12.800px; line-height: 16px; }
.trade-tabs { height: 33px; flex: none; display: flex; padding: 3px 0 0 20px; font-size: 14px; color: #6d707b; }
.trade-tabs b { font-weight: 500; color: #d4d5d9; height: 29px; border-bottom: 1px solid #d9dade; width: 56px; }
.trade-tabs span { margin-left: 32px; width: 86px; }
.check { width: 14px; height: 14px; margin-top: -1px; border: 1px solid #34353c; border-radius: 2px; }
.trade-tabs small { font-size: 12px; line-height: 15px; margin-left: 6px; width: 36px; }
.s1 { margin-top: -1px; } .s2 { margin: -1px 0 0 10px; color: #858893; }
.h2 { height: 26px; line-height: 24px; }
.trades { position: relative; padding-right: 8px; }
.trades .row { line-height: 22px; }
.trades .thumb { top: 2px; height: 21px; }
.row.hot { background: #1e1f23; }
.rail { width: 43px; margin-left: 3px; background: #0d0e10; display: flex; flex-direction: column; color: #777a8a; }
.rail-item { height: 56px; flex: none; display: grid; place-items: center; }
.rail hr { width: 100%; height: 1px; border: 0; margin: 0 0 7px; background: #2e2f34; flex: none; }
.rail-box { position: relative; width: 32px; height: 32px; display: grid; place-items: center; border-radius: 4px; }
.on .rail-box { background: #2a2b30; color: #d2d3d7; }
.over { position: absolute; left: 6px; top: 6px; fill: #777a8a; }
.over text { font-size: 10px; font-weight: 700; } .over .tiny { font-size: 6px; }
.grow { height: 326px; flex: none; }
.watermark { position: absolute; left: 995px; top: 951px; display: flex; align-items: center; height: 29px; color: #fff; font-size: 24px; line-height: 29px; z-index: 5; text-shadow: 0 0 2px #000; }
.watermark span:last-child { padding-top: 3px; letter-spacing: -.15px; }
.at { color: #dededa; margin: 0 4px 0 5px; font-size: 22px; width: 21px; }
</style>
